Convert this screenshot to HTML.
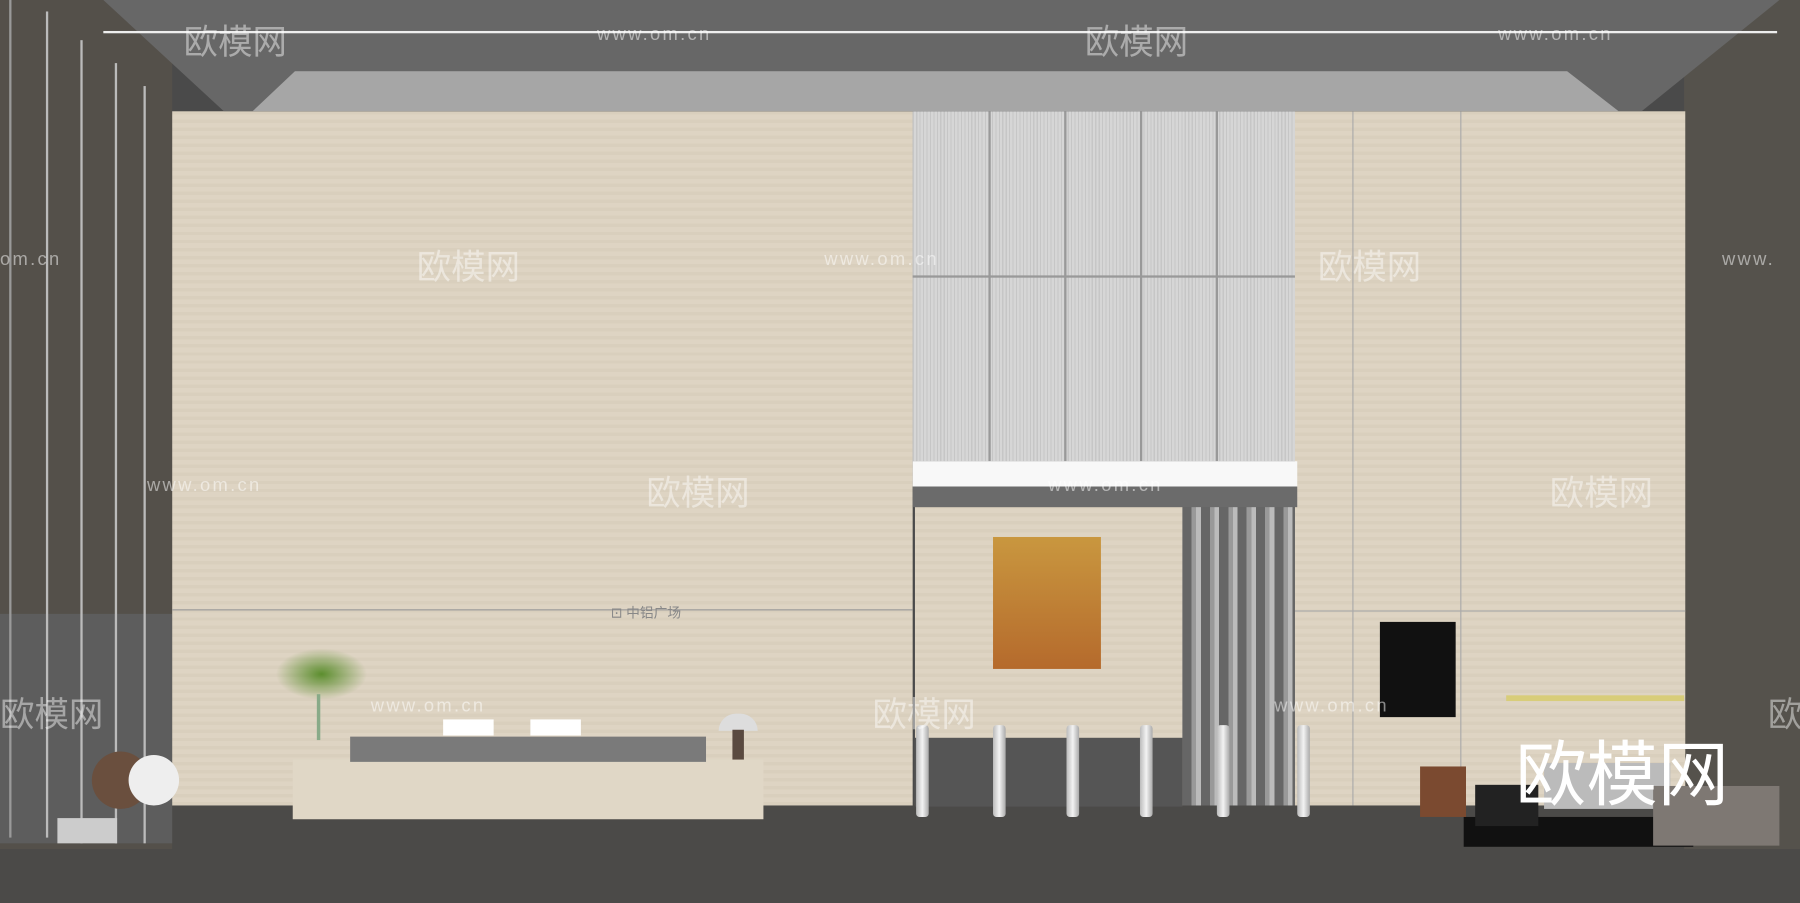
<!DOCTYPE html><html><head><meta charset="utf-8"><style>
html,body{margin:0;padding:0;width:1800px;height:903px;overflow:hidden;background:#4a4a4a}
#s{position:absolute;left:0;top:0;width:1568px;height:787px;transform:scale(1.148,1.1474);transform-origin:0 0;overflow:hidden;font-family:"Liberation Sans","Noto Sans CJK SC",sans-serif}
#s div{position:absolute}
.b{background:#ddd3c1;background-image:repeating-linear-gradient(0deg,rgba(0,0,0,.02) 0 3px,rgba(255,255,255,.03) 3px 7px)}
.wm{color:rgba(255,255,255,.45);font-size:30px;white-space:nowrap}
.ww{color:rgba(255,255,255,.5);font-size:16px;letter-spacing:2px;white-space:nowrap}
.post{width:11px;height:80px;background:linear-gradient(90deg,#bbb,#f3f3f3,#aaa);border-radius:3px}
</style></head><body><div id="s">
<div style="left:0;top:700px;width:1568px;height:87px;background:#4b4a48"></div>
<div style="left:0;top:0;width:150px;height:740px;background:#54504a"></div>
<div style="left:0;top:535px;width:150px;height:200px;background:#5d5d5d"></div>
<div style="left:8px;top:0;width:2px;height:730px;background:#999"></div>
<div style="left:40px;top:10px;width:2px;height:720px;background:#bbb"></div>
<div style="left:70px;top:35px;width:2px;height:700px;background:#bbb"></div>
<div style="left:100px;top:55px;width:2px;height:680px;background:#bbb"></div>
<div style="left:125px;top:75px;width:2px;height:660px;background:#bbb"></div>
<div style="left:1467px;top:0;width:101px;height:740px;background:#55524c"></div>
<div class="b" style="left:150px;top:97px;width:645px;height:605px"></div>
<div class="b" style="left:1128px;top:97px;width:340px;height:605px"></div>
<div style="left:1178px;top:97px;width:1px;height:605px;background:#aaa"></div>
<div style="left:1272px;top:97px;width:1px;height:605px;background:#aaa"></div>
<div style="left:1128px;top:532px;width:340px;height:1px;background:#aaa"></div>
<div style="left:150px;top:531px;width:645px;height:1px;background:#999"></div>
<div style="left:795px;top:97px;width:333px;height:305px;background:#d0d0d0;background-image:repeating-linear-gradient(90deg,#c6c6c6 0 1px,#d6d6d6 1px 3px)"></div>
<div style="left:795px;top:240px;width:333px;height:2px;background:#999"></div>
<div style="left:861px;top:97px;width:2px;height:305px;background:#999"></div>
<div style="left:927px;top:97px;width:2px;height:305px;background:#999"></div>
<div style="left:993px;top:97px;width:2px;height:305px;background:#999"></div>
<div style="left:1059px;top:97px;width:2px;height:305px;background:#999"></div>
<div style="left:795px;top:402px;width:335px;height:22px;background:#f8f8f8"></div>
<div style="left:795px;top:424px;width:335px;height:18px;background:#6b6b6b"></div>
<div class="b" style="left:797px;top:442px;width:233px;height:260px"></div>
<div style="left:1030px;top:442px;width:98px;height:260px;background:#777;background-image:repeating-linear-gradient(90deg,#666 0 8px,#999 8px 12px,#bbb 12px 16px)"></div>
<div style="left:865px;top:468px;width:94px;height:115px;background:linear-gradient(#c9973f,#b56a2c)"></div>
<div style="left:797px;top:643px;width:233px;height:60px;background:#555"></div>
<div style="left:1202px;top:542px;width:66px;height:83px;background:#111"></div>
<div style="left:1312px;top:606px;width:155px;height:5px;background:#d8cd7a"></div>
<div style="left:0;top:0;width:1568px;height:100px;background:#676767;clip-path:polygon(90px 0,1550px 0,1430px 97px,195px 97px)"></div>
<div style="left:0;top:0;width:1568px;height:100px;background:#a6a6a6;clip-path:polygon(257px 62px,1365px 62px,1410px 97px,220px 97px)"></div>
<div style="left:90px;top:27px;width:1458px;height:2px;background:#eee"></div>
<div style="left:255px;top:662px;width:410px;height:52px;background:#e0d7c6"></div>
<div style="left:305px;top:642px;width:310px;height:22px;background:#7a7a7a"></div>
<div style="left:386px;top:627px;width:44px;height:14px;background:#fff"></div>
<div style="left:462px;top:627px;width:44px;height:14px;background:#fff"></div>
<div style="left:626px;top:622px;width:34px;height:15px;background:#ddd;border-radius:17px 17px 0 0"></div>
<div style="left:638px;top:636px;width:10px;height:26px;background:#5a4a40"></div>
<div style="left:240px;top:565px;width:80px;height:45px;background:radial-gradient(#5c8e2e,rgba(90,140,40,0) 70%)"></div>
<div style="left:276px;top:605px;width:3px;height:40px;background:#8a8"></div>
<div style="left:80px;top:655px;width:50px;height:50px;background:#6a4f3e;border-radius:50%"></div>
<div style="left:112px;top:658px;width:44px;height:44px;background:#eee;border-radius:50%"></div>
<div style="left:50px;top:713px;width:52px;height:22px;background:#ccc"></div>
<div class="post" style="left:798px;top:632px"></div><div class="post" style="left:865px;top:632px"></div><div class="post" style="left:929px;top:632px"></div><div class="post" style="left:993px;top:632px"></div><div class="post" style="left:1060px;top:632px"></div><div class="post" style="left:1130px;top:632px"></div>
<div style="left:1275px;top:712px;width:200px;height:26px;background:#111"></div>
<div style="left:1237px;top:668px;width:40px;height:44px;background:#7b4a30"></div>
<div style="left:1285px;top:684px;width:55px;height:36px;background:#222"></div>
<div style="left:1345px;top:665px;width:110px;height:40px;background:#bbb"></div>
<div style="left:1440px;top:685px;width:110px;height:52px;background:#7e7873"></div>
<div style="left:1320px;top:625px;color:#fff;font-size:62px;white-space:nowrap">欧模网</div>
<div class="wm" style="left:160px;top:12px">欧模网</div><div class="wm" style="left:945px;top:12px">欧模网</div>
<div class="wm" style="left:363px;top:208px">欧模网</div><div class="wm" style="left:1148px;top:208px">欧模网</div>
<div class="wm" style="left:563px;top:405px">欧模网</div><div class="wm" style="left:1350px;top:405px">欧模网</div>
<div class="wm" style="left:0;top:598px">欧模网</div><div class="wm" style="left:760px;top:598px">欧模网</div><div class="wm" style="left:1540px;top:598px">欧</div>
<div class="ww" style="left:520px;top:22px">www.om.cn</div><div class="ww" style="left:1305px;top:22px">www.om.cn</div>
<div class="ww" style="left:0;top:218px">om.cn</div><div class="ww" style="left:718px;top:218px">www.om.cn</div><div class="ww" style="left:1500px;top:218px">www.</div>
<div class="ww" style="left:128px;top:415px">www.om.cn</div><div class="ww" style="left:913px;top:415px">www.om.cn</div>
<div class="ww" style="left:323px;top:607px">www.om.cn</div><div class="ww" style="left:1110px;top:607px">www.om.cn</div>
<div style="left:532px;top:525px;color:#888;font-size:12px">⊡ 中铝广场</div>
</div></body></html>
